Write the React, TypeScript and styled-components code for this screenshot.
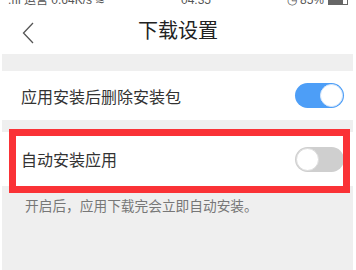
import React from "react";
import styled, { createGlobalStyle } from "styled-components";

const Global = createGlobalStyle`
  html, body { margin: 0; padding: 0; background: #ffffff; }
  body { font-family: "Noto Sans CJK SC", "Noto Sans", sans-serif; width: 356px; height: 270px; overflow: hidden; }
`;

const Page = styled.div`
  width: 356px;
  height: 270px;
  display: flex;
  flex-direction: column;
  background: #fff;
  overflow: hidden;
`;

const StatusBar = styled.div`
  height: 6px;
  overflow: hidden;
  display: flex;
  align-items: flex-end;
  justify-content: space-between;
  padding: 0 8px 0 8px;
  font-family: "Liberation Sans", "Noto Sans CJK SC", sans-serif;
  font-size: 12px;
  color: #555;
  line-height: 12px;
`;

const StatusText = styled.span`
  display: block;
  white-space: nowrap;
`;

const Battery = styled.span`
  display: inline-block;
  width: 20px;
  height: 9px;
  border: 1px solid #666;
  box-sizing: border-box;
  margin-left: 4px;
  background: linear-gradient(90deg, #666 0 80%, transparent 80%);
  vertical-align: -1px;
`;

const Header = styled.div`
  height: 48px;
  display: flex;
  align-items: center;
  justify-content: center;
  position: relative;
`;

const Back = styled.svg`
  position: absolute;
  left: 22px;
  top: 16px;
`;

const Title = styled.div`
  font-size: 20px;
  color: #222;
  margin-top: -2px;
`;

const Body = styled.div`
  flex: 1;
  margin: 0 3px 0 2px;
  background: #efefef;
  display: flex;
  flex-direction: column;
  padding-top: 17px;
`;

const Row = styled.div<{ $h: number }>`
  position: relative;
  height: ${(p) => p.$h}px;
  background: #fff;
  display: flex;
  align-items: center;
  justify-content: space-between;
  padding: 0 9px 0 19px;
`;

const Label = styled.span`
  font-size: 16px;
  color: #333;
`;

const Gap = styled.div`
  height: 12px;
`;

const Toggle = styled.div<{ $on: boolean }>`
  width: 49px;
  height: 25px;
  border-radius: 13px;
  box-sizing: border-box;
  background: ${(p) => (p.$on ? "#4d9ef7" : "#cfcfcf")};
  position: relative;
`;

const Knob = styled.div<{ $on: boolean }>`
  position: absolute;
  top: 1px;
  left: ${(p) => (p.$on ? "25px" : "1px")};
  width: 23px;
  height: 23px;
  border-radius: 50%;
  background: #fff;
  box-sizing: border-box;
  border: 1px solid ${(p) => (p.$on ? "#d8e8fb" : "#dddddd")};
`;

const Highlight = styled.div`
  position: absolute;
  left: 7px;
  right: 3px;
  top: -3px;
  bottom: -7px;
  border: 7px solid #fa3236;
  pointer-events: none;
`;

const Caption = styled.div`
  font-size: 13.7px;
  color: #777;
  padding: 9px 0 0 23px;
`;

export default function App() {
  return (
    <Page>
      <Global />
      <StatusBar>
        <StatusText>.ııl 运营 0.64K/s ≋</StatusText>
        <StatusText>04:35</StatusText>
        <StatusText>
          ◷ 85%
          <Battery />
        </StatusText>
      </StatusBar>
      <Header>
        <Back width="12" height="22" viewBox="0 0 12 22">
          <path d="M11 1 L1.5 11 L11 21" fill="none" stroke="#555" strokeWidth="1.3" />
        </Back>
        <Title>下载设置</Title>
      </Header>
      <Body>
        <Row $h={49}>
          <Label>应用安装后删除安装包</Label>
          <Toggle $on={true}>
            <Knob $on={true} />
          </Toggle>
        </Row>
        <Gap />
        <Row $h={54}>
          <Label>自动安装应用</Label>
          <Toggle $on={false}>
            <Knob $on={false} />
          </Toggle>
          <Highlight />
        </Row>
        <Caption>开启后，应用下载完会立即自动安装。</Caption>
      </Body>
    </Page>
  );
}
